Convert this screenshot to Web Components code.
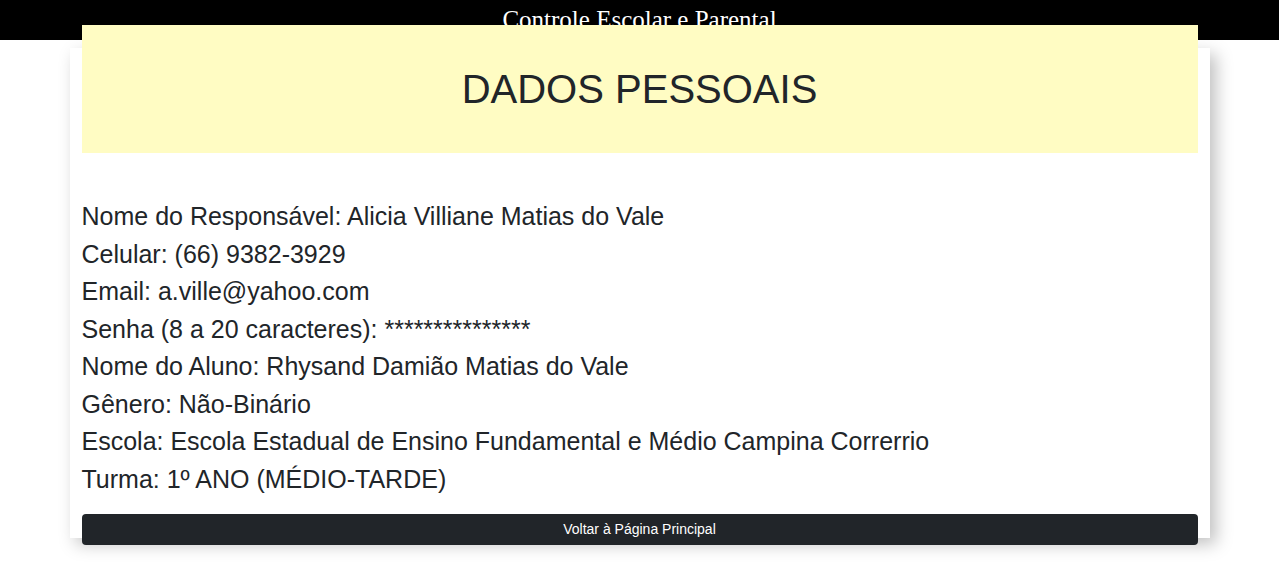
<!DOCTYPE html>
<html lang="pt-BR">
<head>
<meta charset="utf-8">
<meta name="viewport" content="width=device-width, initial-scale=1">
<title>Controle Escolar e Parental</title>
<style>
  body { margin: 0; background: #fff; color: #212529; font-family: "Liberation Sans", Arial, sans-serif; }
</style>
</head>
<body>
<site-header>Controle Escolar e Parental</site-header>
<profile-card>
  <page-banner slot="banner">DADOS PESSOAIS</page-banner>
  <data-line label="Nome do Responsável">Alicia Villiane Matias do Vale</data-line>
  <data-line label="Celular">(66) 9382-3929</data-line>
  <data-line label="Email">a.ville@yahoo.com</data-line>
  <data-line label="Senha (8 a 20 caracteres)">***************</data-line>
  <data-line label="Nome do Aluno">Rhysand Damião Matias do Vale</data-line>
  <data-line label="Gênero">Não-Binário</data-line>
  <data-line label="Escola">Escola Estadual de Ensino Fundamental e Médio Campina Correrrio</data-line>
  <data-line label="Turma">1º ANO (MÉDIO-TARDE)</data-line>
  <back-button slot="action">Voltar à Página Principal</back-button>
</profile-card>
<script>
  const define = (name, html, setup) => {
    const template = document.createElement('template');
    template.innerHTML = html;
    customElements.define(name, class extends HTMLElement {
      constructor() {
        super();
        this.attachShadow({ mode: 'open' }).append(template.content.cloneNode(true));
      }
      connectedCallback() { if (setup) setup(this); }
    });
  };

  define('site-header', `
    <style>
      :host { display: block; background: #000; color: #fff; text-align: center; }
      header { font: 25px/40px "Liberation Serif", "Times New Roman", serif; }
    </style>
    <header><slot></slot></header>`);

  define('profile-card', `
    <style>
      :host {
        display: block; box-sizing: border-box; position: relative;
        max-width: 1140px; margin: 8px auto 32px; padding: 0 12px;
        background: #fff;
        box-shadow: 6px 6px 16px rgba(0, 0, 0, .25);
      }
      main { display: flow-root; }
      .banner { margin: -23px 0 45px; }
      .action { margin: 16px 0 -7px; }
    </style>
    <main>
      <div class="banner"><slot name="banner"></slot></div>
      <slot></slot>
      <div class="action"><slot name="action"></slot></div>
    </main>`);

  define('page-banner', `
    <style>
      :host { display: block; padding: 40px 16px; background: #fffcc3; text-align: center; }
      h1 { margin: 0; font-size: 40px; line-height: 48px; font-weight: 400; }
    </style>
    <h1><slot></slot></h1>`);

  define('data-line', `
    <style>
      :host { display: block; font-size: 25px; line-height: 1.5; }
    </style>
    <span></span> <slot></slot>`,
    el => { el.shadowRoot.querySelector('span').textContent = el.getAttribute('label') + ':'; });

  define('back-button', `
    <style>
      :host { display: block; }
      button {
        display: block; width: 100%; padding: 8px; border: 0; border-radius: 4px;
        background: #212529; color: #fff; font: 14px/15px "Liberation Sans", Arial, sans-serif; cursor: pointer;
      }
    </style>
    <button type="button"><slot></slot></button>`);
</script>
</body>
</html>
